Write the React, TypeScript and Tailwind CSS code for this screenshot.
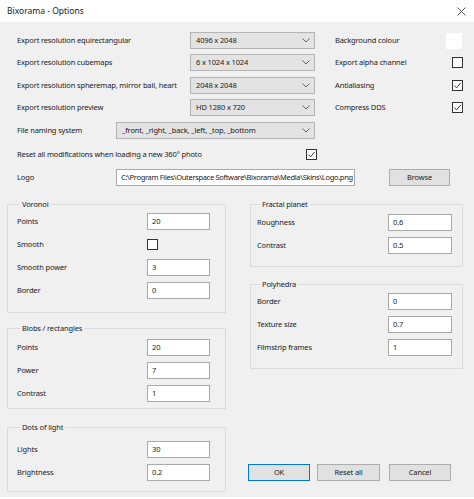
import type { ReactNode } from 'react';

const FONT = { fontFamily: '"Segoe UI", "Noto Sans", "Open Sans", sans-serif' };

function Chevron() {
  return (
    <svg width="8" height="5" viewBox="0 0 8 5" className="shrink-0">
      <path d="M0.5 0.5 L4 4 L7.5 0.5" fill="none" stroke="#555" strokeWidth="0.9" />
    </svg>
  );
}

function Select({ value, width }: { value: string; width: string }) {
  return (
    <div
      className={`${width} flex h-[17px] items-center justify-between border border-[#b4b4b4] bg-[#e3e3e3] pl-[5px] pr-[4px]`}
    >
      <span className="truncate">{value}</span>
      <Chevron />
    </div>
  );
}

function Check({ checked }: { checked?: boolean }) {
  return (
    <div className="flex h-[11px] w-[11px] shrink-0 items-center justify-center border border-[#333] bg-white">
      {checked && (
        <svg width="9" height="9" viewBox="0 0 9 9">
          <path d="M1.3 4.6 L3.5 6.8 L7.8 1.8" fill="none" stroke="#333" strokeWidth="1" />
        </svg>
      )}
    </div>
  );
}

function TextBox({ value, width = 'w-[63px]', className = '' }: { value: string; width?: string; className?: string }) {
  return (
    <div
      className={`${width} flex h-[17px] shrink-0 items-center overflow-hidden whitespace-nowrap border border-[#a9a9a9] bg-white pl-[4px] ${className}`}
    >
      {value}
    </div>
  );
}

function Group({ title, children, className }: { title: string; children: ReactNode; className: string }) {
  return (
    <fieldset className={`border border-[#dcdcdc] ${className}`}>
      <legend className="ml-[3px] px-[2px] leading-[10px]">{title}</legend>
      {children}
    </fieldset>
  );
}

function Field({ label, children, labelW }: { label: string; children: ReactNode; labelW: string }) {
  return (
    <div className="flex h-[17px] items-center">
      <div className={`${labelW} whitespace-nowrap`}>{label}</div>
      {children}
    </div>
  );
}

function TopRow({ label, value, right, control }: { label: string; value: string; right: string; control: ReactNode }) {
  return (
    <div className="flex h-[17px] items-center">
      <div className="w-[173px] box-content whitespace-nowrap pl-[17px]">{label}</div>
      <Select value={value} width="w-[125px]" />
      <div className="ml-[20px] flex w-[128px] items-center justify-between">
        <span>{right}</span>
        {control}
      </div>
    </div>
  );
}

export default function App() {
  return (
    <div
      className="flex h-[499px] w-[474px] flex-col bg-white text-[7.5px] tracking-[-0.15px] text-[#1a1a1a]"
      style={FONT}
    >
      {/* title bar */}
      <div className="flex h-[22px] items-center justify-between pl-[7px] pr-[8px] text-[8.5px] tracking-normal">
        <span>Bixorama - Options</span>
        <svg width="9" height="9" viewBox="0 0 9 9">
          <path d="M0.5 0.5 L8.5 8.5 M8.5 0.5 L0.5 8.5" stroke="#333" strokeWidth="0.8" />
        </svg>
      </div>

      <div className="flex-1 bg-[#f0f0f0] pt-[10px]">
        <TopRow
          label="Export resolution equirectangular"
          value="4096 x 2048"
          right="Background colour"
          control={<div className="mr-[1px] h-[16px] w-[16px] bg-white" />}
        />
        <div className="mt-[5px]">
          <TopRow label="Export resolution cubemaps" value="6 x 1024 x 1024" right="Export alpha channel" control={<Check />} />
        </div>
        <div className="mt-[6px]">
          <TopRow
            label="Export resolution spheremap, mirror ball, heart"
            value="2048 x 2048"
            right="Antialiasing"
            control={<Check checked />}
          />
        </div>
        <div className="mt-[5px]">
          <TopRow label="Export resolution preview" value="HD 1280 x 720" right="Compress DDS" control={<Check checked />} />
        </div>
        <div className="mt-[6px] flex h-[17px] items-center">
          <div className="w-[99px] box-content pl-[17px]">File naming system</div>
          <Select value="_front, _right, _back, _left, _top, _bottom" width="w-[199px]" />
        </div>
        <div className="mt-[7px] flex h-[17px] items-center">
          <div className="w-[289px] box-content whitespace-nowrap pl-[17px]">
            Reset all modifications when loading a new 360° photo
          </div>
          <Check checked />
        </div>
        <div className="mt-[6px] flex h-[17px] items-center">
          <div className="w-[99px] box-content pl-[17px]">Logo</div>
          <TextBox
            value="C:\Program Files\Outerspace Software\Bixorama\Media\Skins\Logo.png"
            width="w-[239px]"
            className="tracking-[-0.32px]"
          />
          <button className="ml-[34px] h-[17px] w-[61px] border border-[#adadad] bg-[#e1e1e1]">Browse</button>
        </div>

        {/* group boxes */}
        <div className="mt-[13px] flex pl-[7px]">
          <div className="flex w-[219px] flex-col">
            <Group title="Voronoi" className="pl-[9px] pt-[4px] pb-[13px]">
              <div className="flex flex-col gap-[6px]">
                <Field label="Points" labelW="w-[130px]"><TextBox value="20" /></Field>
                <Field label="Smooth" labelW="w-[130px]"><Check /></Field>
                <Field label="Smooth power" labelW="w-[130px]"><TextBox value="3" /></Field>
                <Field label="Border" labelW="w-[130px]"><TextBox value="0" /></Field>
              </div>
            </Group>
            <Group title="Blobs / rectangles" className="mt-[10px] pl-[9px] pt-[6px] pb-[6px]">
              <div className="flex flex-col gap-[6px]">
                <Field label="Points" labelW="w-[130px]"><TextBox value="20" /></Field>
                <Field label="Power" labelW="w-[130px]"><TextBox value="7" /></Field>
                <Field label="Contrast" labelW="w-[130px]"><TextBox value="1" /></Field>
              </div>
            </Group>
            <Group title="Dots of light" className="mt-[13px] pl-[9px] pt-[9px] pb-[10px]">
              <div className="flex flex-col gap-[6px]">
                <Field label="Lights" labelW="w-[130px]"><TextBox value="30" /></Field>
                <Field label="Brightness" labelW="w-[130px]"><TextBox value="0.2" /></Field>
              </div>
            </Group>
          </div>

          <div className="ml-[24px] flex w-[213px] flex-col">
            <Group title="Fractal planet" className="pl-[6px] pt-[5px] pb-[12px]">
              <div className="flex flex-col gap-[6px]">
                <Field label="Roughness" labelW="w-[131px]"><TextBox value="0.6" width="w-[64px]" /></Field>
                <Field label="Contrast" labelW="w-[131px]"><TextBox value="0.5" width="w-[64px]" /></Field>
              </div>
            </Group>
            <Group title="Polyhedra" className="mt-[12px] pl-[6px] pt-[4px] pb-[12px]">
              <div className="flex flex-col gap-[6px]">
                <Field label="Border" labelW="w-[131px]"><TextBox value="0" width="w-[64px]" /></Field>
                <Field label="Texture size" labelW="w-[131px]"><TextBox value="0.7" width="w-[64px]" /></Field>
                <Field label="Filmstrip frames" labelW="w-[131px]"><TextBox value="1" width="w-[64px]" /></Field>
              </div>
            </Group>
            <div className="-ml-[2px] mt-[95px] flex">
              <button className="h-[17px] w-[62px] border border-[#0078d7] bg-[#e1e1e1]">OK</button>
              <button className="ml-[7px] h-[17px] w-[63px] border border-[#adadad] bg-[#e1e1e1]">Reset all</button>
              <button className="ml-[9px] h-[17px] w-[62px] border border-[#adadad] bg-[#e1e1e1]">Cancel</button>
            </div>
          </div>
        </div>
      </div>
      <div className="h-[2px] bg-white" />
    </div>
  );
}
